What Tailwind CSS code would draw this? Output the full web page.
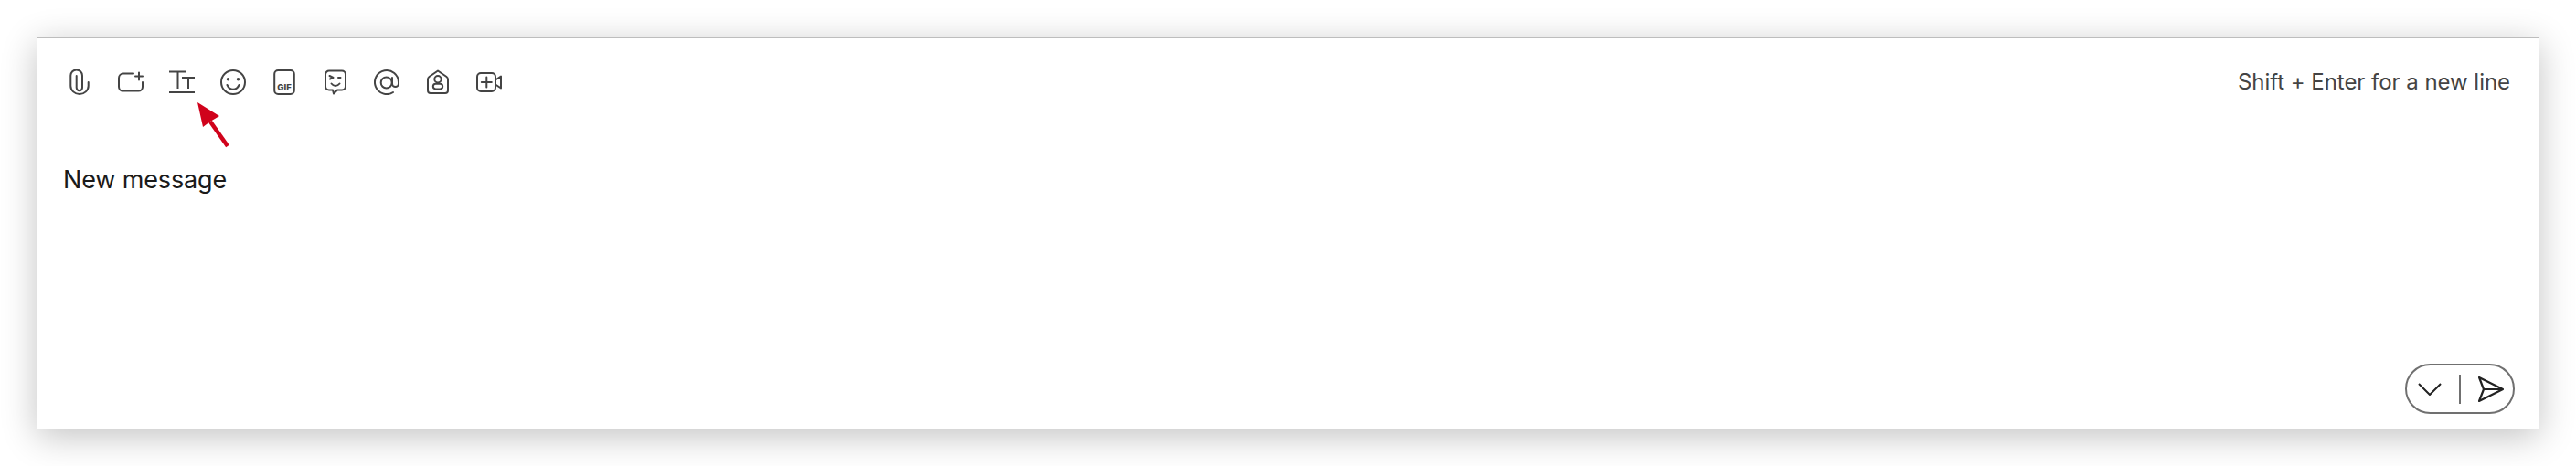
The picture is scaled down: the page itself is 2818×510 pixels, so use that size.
<!DOCTYPE html>
<html lang="en">
<head>
    <meta charset="UTF-8">
    <title>New message</title>
    <script src="https://cdn.jsdelivr.net/npm/@tailwindcss/browser@4"></script>
</head>
<body class="bg-white font-['Inter',sans-serif]">
    <div class="h-[510px] pt-[40px] px-[40px]">
        <!-- Composer -->
        <div class="relative h-[430px] flex flex-col bg-white border-t-2 border-[#bdbdbd] shadow-[0_8px_36px_rgba(0,0,0,0.24)]">
            <!-- Toolbar -->
            <div class="flex items-center justify-between h-[96px] pl-[33px] pr-[32px]">
                <div class="flex items-center gap-[28px] text-[#444]">
                    <!-- Attach -->
                    <svg class="w-[28px] h-[28px]" viewBox="0 0 28 28" fill="none" stroke="currentColor" stroke-width="2" stroke-linecap="round" stroke-linejoin="round">
                        <path d="M23.700 14v4a9.700 9 0 0 1-19.400 0V6.800a6.350 6.350 0 0 1 12.700 0V20a3.150 3.150 0 0 1-6.300 0V7"/>
                    </svg>
                    <!-- Screenshot -->
                    <svg class="w-[28px] h-[28px]" viewBox="0 0 28 28" fill="none" stroke="currentColor" stroke-width="2" stroke-linecap="round" stroke-linejoin="round">
                        <path d="M17 4.500H6a5 5 0 0 0-5 5V19a4.500 4.500 0 0 0 4.500 4.500h17a4.500 4.500 0 0 0 4.500-4.500v-5"/>
                        <path d="M23 3.500v8M19 7.500h8"/>
                    </svg>
                    <!-- Format text -->
                    <svg class="w-[28px] h-[28px]" viewBox="0 0 28 28" fill="none" stroke="currentColor" stroke-width="2">
                        <path d="M0 2.500h19M9.500 2.500V21M14 9h14M21 9v12M0 25h28"/>
                    </svg>
                    <!-- Emoji -->
                    <svg class="w-[28px] h-[28px]" viewBox="0 0 28 28" fill="none" stroke="currentColor" stroke-width="2" stroke-linecap="round">
                        <circle cx="14" cy="14" r="13"/>
                        <circle cx="8.500" cy="10.700" r="1.800" fill="currentColor" stroke="none"/>
                        <circle cx="19.500" cy="10.700" r="1.800" fill="currentColor" stroke="none"/>
                        <path d="M7.500 17c1.500 3.500 4 4.800 6.500 4.800s5-1.300 6.500-4.800"/>
                    </svg>
                    <!-- GIF -->
                    <svg class="w-[28px] h-[28px]" viewBox="0 0 28 28" fill="none">
                        <rect x="3.200" y="1" width="21.600" height="26" rx="4" stroke="currentColor" stroke-width="2"/>
                        <text x="14" y="23.300" text-anchor="middle" fill="currentColor" font-family="Inter" font-size="9.500" font-weight="800">GIF</text>
                    </svg>
                    <!-- Sticker -->
                    <svg class="w-[28px] h-[28px]" viewBox="0 0 28 28" fill="none" stroke="currentColor" stroke-width="2" stroke-linecap="round" stroke-linejoin="round">
                        <path d="M7 1.500h14a4 4 0 0 1 4 4v13a4 4 0 0 1-4 4h-5l-4 4-1-4H7a4 4 0 0 1-4-4v-13a4 4 0 0 1 4-4z"/>
                        <path d="M7.500 7l4 2-3.500 1.500M17 9h2.500M9.500 15.500c2.500 3.200 6.500 3.200 9 0"/>
                    </svg>
                    <!-- Mention -->
                    <svg class="w-[28px] h-[28px]" viewBox="0 0 28 28" fill="none" stroke="currentColor" stroke-width="2" stroke-linecap="round">
                        <circle cx="13.700" cy="14.500" r="6"/>
                        <path d="M20 9v6.500a3.500 3.500 0 0 0 7 0V14a13 13 0 1 0-6 11"/>
                    </svg>
                    <!-- Space -->
                    <svg class="w-[28px] h-[28px]" viewBox="0 0 28 28" fill="none" stroke="currentColor" stroke-width="2" stroke-linejoin="round">
                        <path d="M14 1.500l9.500 6.500a3.500 3.500 0 0 1 1.500 3v12a3 3 0 0 1-3 3H6a3 3 0 0 1-3-3V11A3.500 3.500 0 0 1 4.500 8z"/>
                        <circle cx="14" cy="10.700" r="3.700"/>
                        <rect x="8.800" y="15.800" width="10.400" height="5.600" rx="2.800"/>
                    </svg>
                    <!-- Meeting -->
                    <svg class="w-[28px] h-[28px]" viewBox="0 0 28 28" fill="none" stroke="currentColor" stroke-width="2" stroke-linecap="round" stroke-linejoin="round">
                        <rect x="1" y="4" width="20" height="20" rx="4"/>
                        <path d="M11.300 8.500v11M5.800 14h11M21 11.500l6-4v13l-6-4"/>
                    </svg>
                </div>
                <span class="text-[24px] leading-none tracking-[-0.04px] text-[#444]">Shift + Enter for a new line</span>
            </div>
            <p class="mt-[41px] pl-[29px] text-[27px] leading-[36px] tracking-[-0.15px] text-[#1a1a1a]">New message</p>
            <!-- Send -->
            <div class="mt-auto mb-[17px] mr-[27px] self-end w-[120px] h-[55px] flex items-center pl-[12px] gap-[19px] rounded-full border-2 border-[#707070]">
                <svg class="w-[26px] h-[14px]" viewBox="0 0 26 14" fill="none" stroke="#222" stroke-width="2">
                    <path d="M1 1l12 12L25 1"/>
                </svg>
                <div class="w-[2px] h-[32px] bg-[#707070]"></div>
                <svg class="w-[28px] h-[28px]" viewBox="0 0 28 28" fill="none" stroke="#222" stroke-width="2.200" stroke-linejoin="round">
                    <path d="M1 1l26 13L1 27l5-13zM6 14h21"/>
                </svg>
            </div>
            <!-- Callout arrow -->
            <svg class="absolute left-[170px] top-[68px] w-[40px] h-[54px]" viewBox="0 0 40 54">
                <path d="M6 2l24 15-10 6-8 6z" fill="#d0021b"/>
                <path d="M20 23l19 27" stroke="#d0021b" stroke-width="4.500"/>
            </svg>
        </div>
    </div>
</body>
</html>
